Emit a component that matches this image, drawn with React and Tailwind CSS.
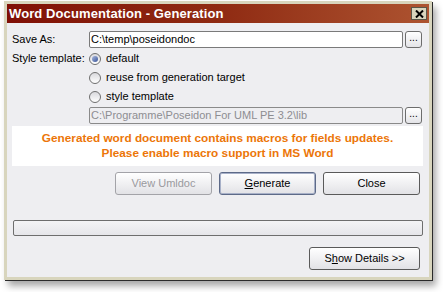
import React from "react";

// small radio button drawn with divs
function Radio({ checked, label }) {
  return (
    <div className="flex items-center h-[19px]">
      <div className="w-[12px] h-[12px] rounded-full border border-[#6f6f6f] bg-gradient-to-b from-[#d9d9dd] to-[#ffffff] flex items-center justify-center">
        {checked && (
          <div className="w-[6px] h-[6px] rounded-full bg-gradient-to-br from-[#a9b8dd] to-[#3b5498]" />
        )}
      </div>
      <span className="ml-[5px]">{label}</span>
    </div>
  );
}

function DotsButton() {
  return (
    <button className="ml-[2px] w-[17px] h-[17px] rounded-[3px] border border-[#6d6d6d] bg-gradient-to-b from-white to-[#e4e4e8] text-[10px] leading-none pb-[3px] text-black">
      ...
    </button>
  );
}

function Btn({ children, variant }) {
  let cls =
    "w-[97px] h-[23px] rounded-[3px] border bg-gradient-to-b from-white to-[#e2e2e6] text-[11px] ";
  if (variant === "disabled") cls += "border-[#a3a3a8] text-[#9a9a9e]";
  else if (variant === "focus")
    cls += "border-[#5d6a88] shadow-[inset_0_0_0_1px_#a7b0c8] text-black";
  else cls += "border-[#5a5a5a] text-black";
  return <button className={cls}>{children}</button>;
}

export default function App() {
  return (
    <div className="w-[443px] h-[292px] bg-white pl-[4px] pt-[1px] font-['Liberation_Sans',Arial,sans-serif] text-[11px] text-black">
      <div className="w-[428px] h-[279px] border-[3px] border-[#d8d5bd] shadow-[1px_1px_0_#2a2a2a,4px_6px_7px_rgba(0,0,0,0.35)] flex flex-col">
        {/* title bar */}
        <div className="h-[19px] bg-gradient-to-r from-[#800f06] via-[#8f2a12] to-[#ad5330] flex items-center justify-between pl-[2px] pr-[2px]">
          <span className="text-white font-bold text-[13px] leading-none tracking-[0.1px]">
            Word Documentation - Generation
          </span>
          <div className="w-[16px] h-[13px] bg-[#d8d5bd] border border-[#5a5648] flex items-center justify-center">
            <svg width="9" height="8" viewBox="0 0 9 8">
              <path d="M1 0.5 L8 7.5 M8 0.5 L1 7.5" stroke="#000" strokeWidth="2" />
            </svg>
          </div>
        </div>

        {/* content */}
        <div className="flex-1 bg-[#eeeef1] pl-[5px] pr-[7px] pt-[8px] flex flex-col">
          <div className="flex items-center">
            <span className="w-[77px]">Save As:</span>
            <div className="w-[314px] h-[17px] bg-white border border-[#7a7a7a] rounded-[2px] flex items-center px-[1px]">
              C:\temp\poseidondoc
            </div>
            <DotsButton />
          </div>

          <div className="flex mt-[1px]">
            <span className="w-[77px] h-[19px] flex items-center">Style template:</span>
            <div className="flex flex-col">
              <Radio checked label="default" />
              <Radio label="reuse from generation target" />
              <Radio label="style template" />
            </div>
          </div>

          <div className="flex items-center mt-[1px]">
            <span className="w-[77px]" />
            <div className="w-[314px] h-[17px] bg-[#eeeef1] border border-[#8a8a8a] rounded-[2px] flex items-center px-[1px] text-[#8d8d91]">
              C:\Programme\Poseidon For UML PE 3.2\lib
            </div>
            <DotsButton />
          </div>

          <div className="mt-[2px] w-[411px] h-[40px] bg-white flex flex-col items-center justify-center text-[#ec7608] font-bold text-[11.8px] leading-[15px]">
            <span>Generated word document contains macros for fields updates.</span>
            <span>Please enable macro support in MS Word</span>
          </div>

          <div className="mt-[6px] flex justify-end gap-[7px] pr-[2px]">
            <Btn variant="disabled">View Umldoc</Btn>
            <Btn variant="focus">
              <span className="underline">G</span>enerate
            </Btn>
            <Btn>Close</Btn>
          </div>

          <div className="mt-[25px] w-[410px] ml-[1px] h-[16px] rounded-[2px] border border-[#6e6e6e] bg-gradient-to-b from-[#f4f4f6] to-[#e6e6ea]" />

          <div className="mt-[11px] flex justify-end pr-[2px]">
            <button className="w-[111px] h-[23px] rounded-[3px] border border-[#5a5a5a] bg-gradient-to-b from-white to-[#e2e2e6] text-[11px]">
              S<span className="underline">h</span>ow Details &gt;&gt;
            </button>
          </div>
        </div>
      </div>
    </div>
  );
}
